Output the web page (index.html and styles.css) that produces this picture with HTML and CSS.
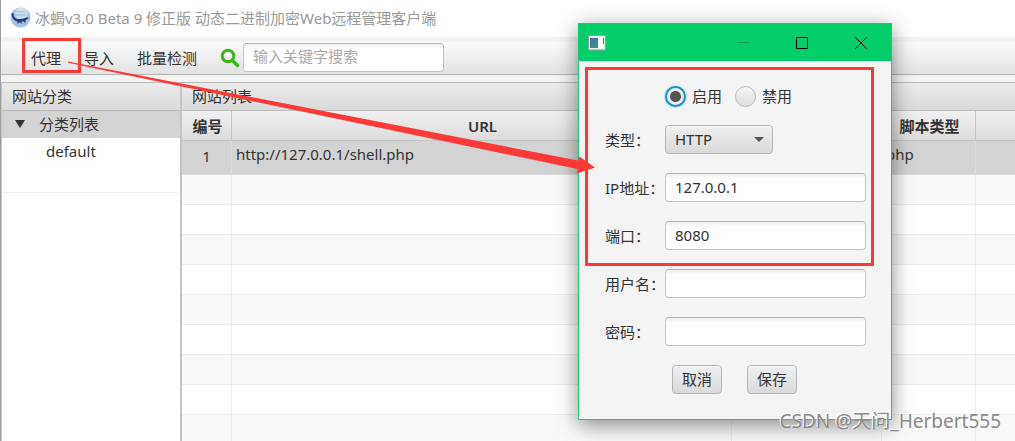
FILE: index.html
```html
<!DOCTYPE html>
<html lang="zh-CN">
<head>
<meta charset="utf-8">
<title>冰蝎v3.0 Beta 9</title>
<link rel="stylesheet" href="styles.css">
</head>
<body>
<div class="app">
  <header class="titlebar">
    <svg class="logo" viewBox="0 0 20 20" aria-hidden="true">
      <circle cx="10" cy="10" r="9.6" fill="#a9c4e2"/>
      <circle cx="11" cy="6.500" r="6" fill="#cfdfee"/>
      <path d="M6 4.500h8M5 7.500h10" stroke="#9db9d8" stroke-width="1"/>
      <path d="M1.500 6.500c.8-1.500 2-1 2 .7 0 2.300 1.500 4 3.800 4.300l4.700-.2 4.500-1.600 1.500.8-3 2.200-.3 2.800-1.900-2-2 .6 1.200 2.200-2.800-1.700-2.200 1.500.2-2.300C4 13.500 1.800 11 1.500 6.500z" fill="#1f437f"/>
    </svg>
    <h1 class="title">冰蝎v3.0 Beta 9 修正版 动态二进制加密Web远程管理客户端</h1>
  </header>
  <nav class="toolbar">
    <button class="tool" type="button">代理</button>
    <button class="tool" type="button">导入</button>
    <button class="tool" type="button">批量检测</button>
    <label class="search-label" for="search" aria-label="搜索">
      <svg width="20" height="20" viewBox="0 0 20 20" aria-hidden="true">
        <circle cx="8" cy="8" r="5.800" fill="none" stroke="#3cb51c" stroke-width="3"/>
        <path d="M12.500 12.500l5 5" stroke="#3cb51c" stroke-width="3.400" stroke-linecap="round"/>
      </svg>
    </label>
    <input class="field search" id="search" type="text" placeholder="输入关键字搜索">
  </nav>
  <main class="panes">
    <section class="sidebar">
      <h2 class="pane-title">网站分类</h2>
      <ul class="tree">
        <li class="node node-root"><span class="caret"></span>分类列表</li>
        <li class="node node-leaf">default</li>
      </ul>
    </section>
    <section class="content">
      <h2 class="pane-title">网站列表</h2>
      <table class="sites">
        <colgroup><col class="c-id"><col class="c-url"><col class="c-ip"><col class="c-type"><col></colgroup>
        <thead><tr><th>编号</th><th>URL</th><th></th><th>脚本类型</th><th></th></tr></thead>
        <tbody>
          <tr class="selected"><td class="num">1</td><td>http://127.0.0.1/shell.php</td><td></td><td>php</td><td></td></tr>
          <tr><td></td><td></td><td></td><td></td><td></td></tr>
          <tr><td></td><td></td><td></td><td></td><td></td></tr>
          <tr><td></td><td></td><td></td><td></td><td></td></tr>
          <tr><td></td><td></td><td></td><td></td><td></td></tr>
          <tr><td></td><td></td><td></td><td></td><td></td></tr>
          <tr><td></td><td></td><td></td><td></td><td></td></tr>
          <tr><td></td><td></td><td></td><td></td><td></td></tr>
          <tr><td></td><td></td><td></td><td></td><td></td></tr>
          <tr><td></td><td></td><td></td><td></td><td></td></tr>
        </tbody>
      </table>
    </section>
  </main>

  <div class="dialog" role="dialog" aria-label="代理">
    <div class="dialog-bar">
      <svg class="dialog-icon" width="18" height="16" viewBox="0 0 18 16" aria-hidden="true">
        <path d="M0 1h18v14H0z" fill="#e9eeee"/>
        <path d="M0 .5h18M.5 1v14M0 15h18M17.500 1v14" stroke="#8aa59a"/>
        <path d="M2 3h8v10H2z" fill="#3c8f83"/>
        <path d="M2 3h8L2 12z" fill="#4a74a8"/>
        <path d="M11 3h4v10h-4z" fill="#fff"/>
        <path d="M15.500 3v6" stroke="#4777b5"/>
      </svg>
      <button class="win" type="button" aria-label="最小化" disabled><svg width="12" height="12" viewBox="0 0 12 12"><path d="M0 5.500h12" stroke="#15a05a"/></svg></button>
      <button class="win" type="button" aria-label="最大化"><svg width="12" height="12" viewBox="0 0 12 12"><path d="M.5.5h11v11H.5z" fill="none" stroke="#000"/></svg></button>
      <button class="win" type="button" aria-label="关闭"><svg width="12" height="12" viewBox="0 0 12 12"><path d="M0 0l12 12M12 0L0 12" stroke="#000"/></svg></button>
    </div>
    <form class="form">
      <div class="radios">
        <label class="choice"><input class="radio" type="radio" name="state" checked>启用</label>
        <label class="choice"><input class="radio" type="radio" name="state">禁用</label>
      </div>
      <label for="type">类型：</label>
      <div class="combo">
        <select class="select" id="type"><option>HTTP</option></select>
      </div>
      <label for="ip">IP地址：</label><input class="field" id="ip" type="text" value="127.0.0.1">
      <label for="port">端口：</label><input class="field" id="port" type="text" value="8080">
      <label for="user">用户名：</label><input class="field" id="user" type="text">
      <label for="pass">密码：</label><input class="field" id="pass" type="password">
      <div class="actions">
        <button class="btn" type="button">取消</button>
        <button class="btn" type="button">保存</button>
      </div>
    </form>
  </div>

  <svg class="marks" width="900" height="300" viewBox="0 0 900 300" aria-hidden="true">
    <g fill="none" stroke="#fb3a37" stroke-width="3">
      <path d="M23.500 39.500h56v32h-56z"/>
      <path d="M586.500 68.500h286v196h-286z"/>
    </g>
    <path d="M68 61.500L578 160.500l1.500-4 15.500 11-18 6 .5-4.500L68 62.700z" fill="#fb3a37"/>
  </svg>
  <p class="watermark">CSDN @天问_Herbert555</p>
</div>
</body>
</html>
```
FILE: styles.css
```css
* { box-sizing: border-box; }

body {
  margin: 0;
  color: #333;
  font: 15px/20px "Noto Sans", "Noto Sans CJK SC", sans-serif;
}

button, input, select { color: inherit; font: inherit; }
h1, h2, ul, p { margin: 0; padding: 0; font-weight: 400; font-size: inherit; }

.app {
  position: relative;
  display: flex;
  flex-direction: column;
  height: 100vh;
  overflow: hidden;
  border-left: 1px solid #a0a0a0;
  background: #f3f3f3;
}

.titlebar {
  display: flex;
  align-items: center;
  gap: 4px;
  height: 37px;
  flex: none;
  padding: 0 0 2px 9px;
  background: #fff;
}
.logo { width: 21px; height: 21px; }
.title { color: #999; white-space: nowrap; }

.toolbar {
  display: flex;
  align-items: center;
  gap: 1px;
  height: 33px;
  flex: none;
  margin: 5px 0 7px;
  padding-left: 19px;
  border-bottom: 1px solid #b4b4b4;
  background: linear-gradient(#fbfbfb, #e2e2e2);
}
.tool { padding: 0 11px; border: 0; background: none; }
.search-label { display: flex; margin: 0 2px 0 11px; }

.field {
  width: 100%;
  height: 29px;
  padding: 0 9px 2px;
  border: 1px solid #c4c4c4;
  border-top-color: #b4b4b4;
  border-radius: 4px;
  background: linear-gradient(#f0f0f0, #fff 5px);
  outline: 0;
}
.search { width: 201px; margin-bottom: 2px; }
.search::placeholder { color: #aaa; opacity: 1; }

.panes { display: flex; flex: 1; min-height: 0; }
.sidebar {
  width: 181px;
  flex: none;
  border: solid #c4c4c4;
  border-width: 0 2px 0 1px;
  background: #fff;
}
.content { flex: 1; min-width: 0; background: #fff; }
.pane-title {
  height: 29px;
  padding: 3px 10px;
  border: solid #bcbcbc;
  border-width: 1px 0;
  background: linear-gradient(#ececec, #dadada);
}

.tree { list-style: none; border-bottom: 1px solid #f0f0f0; padding-bottom: 27px; }
.node { display: flex; align-items: center; height: 27px; padding-bottom: 2px; }
.node-root { gap: 14px; padding-left: 13px; background: #d3d3d3; }
.node-leaf { padding-left: 44px; }
.caret {
  border: solid transparent;
  border-width: 8px 5px 0;
  border-top-color: #333;
}

.sites { width: 100%; table-layout: fixed; border-collapse: separate; border-spacing: 0; }
.c-id { width: 50px; }
.c-url { width: 500px; }
.c-ip { width: 150px; }
.c-type { width: 94px; }
.sites th {
  height: 30px;
  padding: 0 0 0 2px;
  border: solid #c4c4c4;
  border-width: 0 1px 1px 0;
  background: linear-gradient(#f0f0f0, #dcdcdc);
  font-weight: 600;
}
.sites td {
  height: 30px;
  padding: 0 4px;
  border: solid #ececec;
  border-width: 0 1px 1px 0;
}
.sites th:last-child, .sites td:last-child { border-right: 0; }
.sites tr:nth-child(even) td { background: #f9f9f9; }
.sites .selected td {
  height: 34px;
  padding-bottom: 8px;
  border-color: #dcdcdc;
  background: #d3d3d3;
}
.sites .selected .num { padding-bottom: 4px; text-align: center; }

.dialog {
  position: absolute;
  top: 23px;
  left: 577px;
  width: 314px;
  border: 1px solid #1fc877;
  background: #f4f4f4;
  box-shadow: 0 5px 20px rgba(0, 0, 0, .45);
}
.dialog-bar {
  display: flex;
  align-items: center;
  height: 37px;
  padding-right: 1px;
  background: #02cf6b;
}
.dialog-icon { margin: 0 auto 0 9px; }
.win { display: flex; justify-content: center; width: 59px; padding: 0; border: 0; background: none; }

.form {
  display: grid;
  grid-template-columns: 60px 1fr;
  grid-template-rows: 20px;
  grid-auto-rows: 29px;
  row-gap: 19px;
  align-items: center;
  padding: 25px 25px 25px 26px;
  white-space: nowrap;
}
.radios { grid-column: 2; display: flex; gap: 13px; }
.choice { display: flex; align-items: center; gap: 6px; }
.radio {
  appearance: none;
  width: 21px;
  height: 21px;
  margin: 0;
  border: 1px solid #b8b8b8;
  border-radius: 50%;
  background: linear-gradient(#f4f4f4, #dfdfdf);
}
.radio:checked {
  border: 2px solid #0f96c9;
  background: radial-gradient(circle, #555 5px, #ededed 6px);
  box-shadow: 0 0 2px #4fb6dc;
}

.combo { position: relative; width: 108px; }
.combo::after {
  content: "";
  position: absolute;
  top: 12px;
  right: 9px;
  border: solid transparent;
  border-width: 5px 5px 0;
  border-top-color: #555;
  pointer-events: none;
}
.select, .btn {
  height: 29px;
  border: 1px solid #b5b5b5;
  border-radius: 4px;
  background: linear-gradient(#f0f0f0, #dadada);
  box-shadow: inset 0 1px #fafafa;
}
.select { appearance: none; width: 100%; padding: 0 9px 2px; }
.actions { grid-column: 2; display: flex; gap: 25px; padding-left: 7px; }
.btn { width: 50px; padding: 0 0 2px; }

.marks { position: absolute; top: 0; left: -1px; pointer-events: none; }
.watermark {
  position: absolute;
  right: 14px;
  bottom: 7px;
  color: #8a8a8a;
  font-size: 19px;
  line-height: 26px;
  text-shadow: -1px -1px #fff;
}
```
